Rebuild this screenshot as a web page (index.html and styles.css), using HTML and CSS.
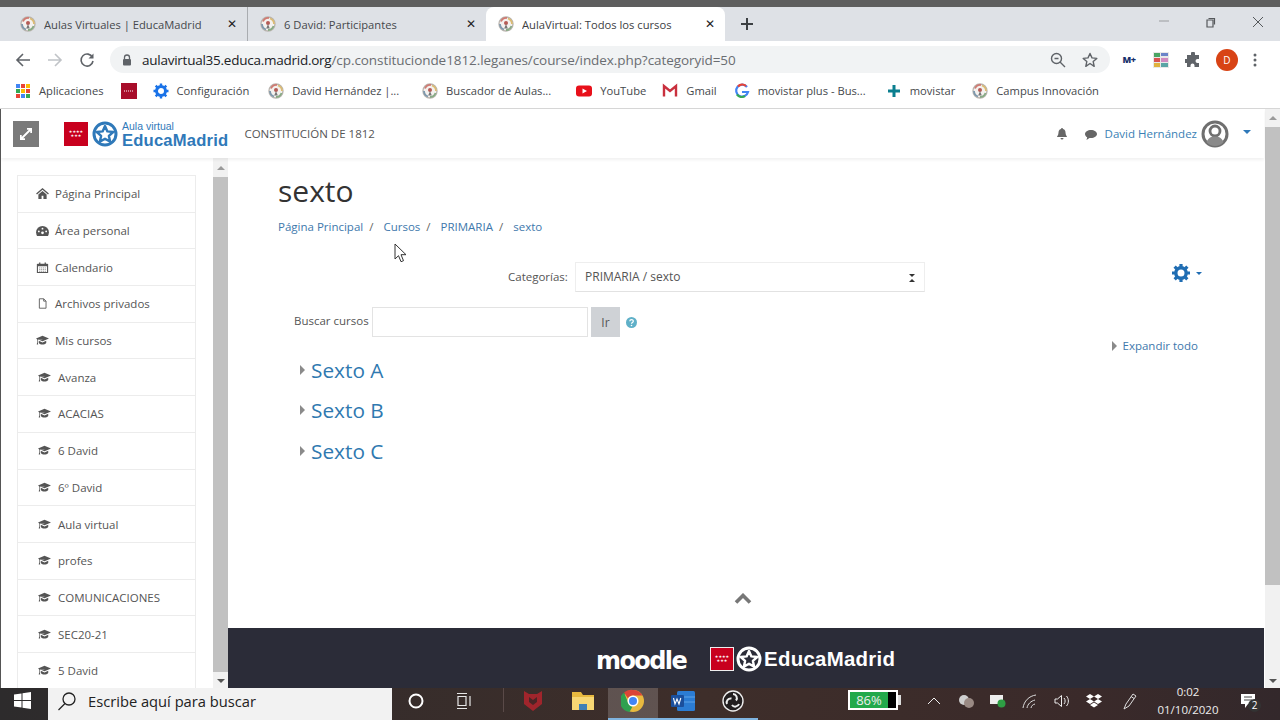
FILE: index.html
```html
<!DOCTYPE html>
<html lang="es">
<head>
<meta charset="utf-8">
<title>AulaVirtual: Todos los cursos</title>
<link rel="stylesheet" href="styles.css">
</head>
<body>
<svg class="defs" width="0" height="0" aria-hidden="true">
  <symbol id="fav" viewBox="0 0 16 16">
    <circle cx="8" cy="8" r="7" fill="#f4f1ee" stroke="#b9b4ae" stroke-width="1.400"/>
    <path d="M3 5.500A6 6 0 0 1 9 2" fill="none" stroke="#cf7a72" stroke-width="1.800"/>
    <path d="M10 2.500A6 6 0 0 1 14 8" fill="none" stroke="#dcbb72" stroke-width="1.800"/>
    <path d="M13.500 10A6 6 0 0 1 8 14" fill="none" stroke="#86ab84" stroke-width="1.800"/>
    <path d="M6 13.500A6 6 0 0 1 2 8" fill="none" stroke="#7d98ad" stroke-width="1.800"/>
    <circle cx="8" cy="7" r="2" fill="#b55c56"/><path d="M6.200 12.500 8 8l1.800 4.500z" fill="#777"/>
  </symbol>
  <symbol id="cap" viewBox="0 0 16 12">
    <path d="M8 0 16 3.500 8 7 3.600 5.100 8 4.600 7.800 4 2 5 0 3.500zM3.400 6.400 8 8.400l4.600-2v2.800C11.500 10.500 9.800 11 8 11S4.500 10.500 3.400 9.200zM1.400 4.800h.8v3.600l.5 2.600H.9l.5-2.600z" fill="#555"/>
  </symbol>
  <symbol id="star" viewBox="0 0 26 26">
    <circle cx="13" cy="13" r="11" fill="none" stroke="currentColor" stroke-width="3"/>
    <path d="M13 5l2.400 5.400 5.800.6-4.300 3.900 1.200 5.700L13 17.700l-5.100 2.900 1.200-5.700L4.800 11l5.800-.6z" fill="none" stroke="currentColor" stroke-width="2.400" stroke-linejoin="round"/>
  </symbol>
</svg>

<div class="topline"></div>

<div class="tabstrip">
  <div class="tab tab-first">
    <svg class="fav"><use href="#fav"/></svg><span class="tab-title">Aulas Virtuales | EducaMadrid</span><span class="tab-x">✕</span>
  </div>
  <div class="tab tab-second">
    <svg class="fav"><use href="#fav"/></svg><span class="tab-title">6 David: Participantes</span><span class="tab-x">✕</span>
  </div>
  <div class="tab tab-active">
    <svg class="fav"><use href="#fav"/></svg><span class="tab-title">AulaVirtual: Todos los cursos</span><span class="tab-x">✕</span>
  </div>
  <svg class="newtab" width="14" height="14" viewBox="0 0 14 14"><path d="M7 1v12M1 7h12" stroke="#3c4043" stroke-width="2"/></svg>
  <div class="winctl">
    <svg width="12" height="12" viewBox="0 0 12 12"><path d="M1 5h10" stroke="#9a9c9f"/></svg>
    <svg width="12" height="12" viewBox="0 0 12 12"><path d="M3.500 2.500h6v6M2 4h6v7H2z" fill="none" stroke="#55585b" stroke-width="1.200"/></svg>
    <svg width="12" height="12" viewBox="0 0 12 12"><path d="M1 1l10 10M11 1 1 11" stroke="#55585b"/></svg>
  </div>
</div>

<div class="toolbar">
  <svg class="navbtn" width="16" height="16" viewBox="0 0 16 16"><path d="M15 8H2M8 2 2 8l6 6" fill="none" stroke="#5f6368" stroke-width="1.600"/></svg>
  <svg class="navbtn" width="16" height="16" viewBox="0 0 16 16"><path d="M1 8h13M8 2l6 6-6 6" fill="none" stroke="#c0c3c7" stroke-width="1.600"/></svg>
  <svg class="navbtn" width="16" height="16" viewBox="0 0 16 16"><path d="M13.500 5.500A6 6 0 1 0 14 9" fill="none" stroke="#5f6368" stroke-width="1.600"/><path d="M14.500 1.500v5h-5z" fill="#5f6368"/></svg>
  <div class="omnibox">
    <svg class="lock" width="10" height="12" viewBox="0 0 10 12"><path d="M2.500 5V3.500a2.500 2.500 0 0 1 5 0V5" fill="none" stroke="#5f6368" stroke-width="1.300"/><rect x="1" y="5" width="8" height="6.500" rx="1" fill="#5f6368"/></svg>
    <span class="url"><span class="url-host">aulavirtual35.educa.madrid.org</span>/cp.constitucionde1812.leganes/course/index.php?categoryid=50</span>
    <svg class="zoom-ic" width="16" height="16" viewBox="0 0 16 16"><circle cx="6.500" cy="6.500" r="5" fill="none" stroke="#5f6368" stroke-width="1.400"/><path d="M10 10l5 5M4.500 6.500h4" stroke="#5f6368" stroke-width="1.400"/></svg>
    <svg class="star-ic" width="16" height="16" viewBox="0 0 16 16"><path d="M8 1.500l2 4.400 4.800.5-3.600 3.200 1 4.700L8 11.500l-4.200 2.800 1-4.700L1.200 6.400 6 5.900z" fill="none" stroke="#5f6368" stroke-width="1.400" stroke-linejoin="round"/></svg>
  </div>
  <div class="extensions">
    <span class="ext-m">M+</span>
    <svg width="16" height="16" viewBox="0 0 16 16"><rect width="16" height="16" fill="#e8e8e8"/><rect x="1" y="1" width="6" height="4" fill="#4aa564"/><rect x="8" y="1" width="7" height="3" fill="#6a84c9"/><rect x="1" y="6" width="6" height="4" fill="#d9534f"/><rect x="8" y="6" width="7" height="4" fill="#d08ac0"/><rect x="1" y="11" width="6" height="4" fill="#e0b23e"/><rect x="8" y="11" width="7" height="4" fill="#5aa5a5"/></svg>
    <svg width="16" height="16" viewBox="0 0 16 16"><path d="M6 1.500a2 2 0 0 1 4 0V3h4v4h-1.500a2 2 0 0 0 0 4H14v4H9.500v-1.500a2 2 0 0 0-4 0V15H2v-4H.5a2 2 0 0 1 0-4H2V3h4z" fill="#5f6368"/></svg>
    <span class="avatar-d">D</span>
    <svg width="4" height="14" viewBox="0 0 4 14"><circle cx="2" cy="2" r="1.500" fill="#5f6368"/><circle cx="2" cy="7" r="1.500" fill="#5f6368"/><circle cx="2" cy="12" r="1.500" fill="#5f6368"/></svg>
  </div>
</div>

<div class="bookmarks">
  <div class="bm">
    <svg class="bm-ic" viewBox="0 0 16 16"><rect x="1" y="1" width="4" height="4" fill="#4285f4"/><rect x="6" y="1" width="4" height="4" fill="#ea4335"/><rect x="11" y="1" width="4" height="4" fill="#fbbc05"/><rect x="1" y="6" width="4" height="4" fill="#34a853"/><rect x="6" y="6" width="4" height="4" fill="#fbbc05"/><rect x="11" y="6" width="4" height="4" fill="#ea4335"/><rect x="1" y="11" width="4" height="4" fill="#ea4335"/><rect x="6" y="11" width="4" height="4" fill="#4285f4"/><rect x="11" y="11" width="4" height="4" fill="#34a853"/></svg>
    <span>Aplicaciones</span>
  </div>
  <div class="bm bm-solo"><svg class="bm-ic" viewBox="0 0 16 16"><rect width="16" height="16" fill="#a80d2a"/><path d="M3 8h10" stroke="#fff" stroke-dasharray="1 1"/></svg></div>
  <div class="bm bm-conf">
    <svg class="bm-ic" viewBox="0 0 16 16"><circle cx="8" cy="8" r="4.500" fill="none" stroke="#1a73e8" stroke-width="3"/><path d="M8 .5v15M.5 8h15M2.700 2.700l10.600 10.600M13.300 2.700 2.700 13.300" stroke="#1a73e8" stroke-width="2.400" stroke-dasharray="3 9"/></svg>
    <span>Configuración</span>
  </div>
  <div class="bm"><svg class="bm-ic"><use href="#fav"/></svg><span class="bm-david">David Hernández |...</span></div>
  <div class="bm"><svg class="bm-ic"><use href="#fav"/></svg><span class="bm-long">Buscador de Aulas...</span></div>
  <div class="bm bm-yt">
    <svg class="bm-ic" viewBox="0 0 16 16"><rect y="2.500" width="16" height="11" rx="3" fill="#e8101a"/><path d="M6.500 5.500 11 8l-4.500 2.500z" fill="#fff"/></svg>
    <span>YouTube</span>
  </div>
  <div class="bm">
    <svg class="bm-ic" viewBox="0 0 16 16"><path d="M2 13.500V3l6 5 6-5v10.500" fill="none" stroke="#c9303e" stroke-width="2.400"/></svg>
    <span>Gmail</span>
  </div>
  <div class="bm">
    <svg class="bm-ic" viewBox="0 0 16 16"><path d="M13 4A6 6 0 1 0 14 9H8" fill="none" stroke="#4285f4" stroke-width="2.200"/><path d="M4 3.500A6 6 0 0 1 12 3" fill="none" stroke="#ea4335" stroke-width="2.200"/><path d="M3 11.500A6 6 0 0 0 11 13" fill="none" stroke="#34a853" stroke-width="2.200"/></svg>
    <span class="bm-mid">movistar plus - Bus...</span>
  </div>
  <div class="bm">
    <svg class="bm-ic" viewBox="0 0 16 16"><path d="M8 2v12M2 8h12" stroke="#0b7f8f" stroke-width="3"/></svg>
    <span>movistar</span>
  </div>
  <div class="bm"><svg class="bm-ic"><use href="#fav"/></svg><span>Campus Innovación</span></div>
</div>

<div class="page">
  <div class="pagecol">
    <header class="siteheader">
      <div class="expand-btn">
        <svg width="12" height="12" viewBox="0 0 12 12"><path d="M1 11 11 1M7 .8h4.200V5M5 11.200H.8V7" fill="none" stroke="#fff" stroke-width="1.800"/></svg>
      </div>
      <div class="logo">
        <div class="flag"><span class="flag-stars">★★★★<br>★★★</span></div>
        <svg class="logo-star"><use href="#star"/></svg>
        <div class="logo-text"><span class="logo-small">Aula virtual</span><span class="logo-big">EducaMadrid</span></div>
      </div>
      <span class="sitename">CONSTITUCIÓN DE 1812</span>
      <div class="usermenu">
        <svg width="10" height="12" viewBox="0 0 10 12"><path d="M5 0a1 1 0 0 1 1 1c2 .5 2.500 2 2.500 3.500 0 3 1.500 3.500 1.500 4.500H0c0-1 1.500-1.500 1.500-4.500C1.500 3 2 1.500 4 1a1 1 0 0 1 1-1zM3.500 10h3a1.500 1.500 0 0 1-3 0z" fill="#666"/></svg>
        <svg class="chat-ic" width="12" height="10" viewBox="0 0 12 10"><path d="M6 0c3.300 0 6 1.800 6 4S9.300 8 6 8H4.500L1.500 10l.7-2.700C.8 6.500 0 5.300 0 4c0-2.200 2.700-4 6-4z" fill="#666"/></svg>
        <span class="username">David Hernández</span>
        <svg class="useravatar" width="28" height="28" viewBox="0 0 28 28"><circle cx="14" cy="14" r="12" fill="#fff" stroke="#6f6f6f" stroke-width="3"/><circle cx="14" cy="11" r="5" fill="none" stroke="#6f6f6f" stroke-width="2.800"/><path d="M5.500 22c2-4.500 5-5.500 8.500-5.500s6.500 1 8.500 5.500c-2 2.500-5 4-8.500 4s-6.500-1.500-8.500-4z" fill="#8a8a8a"/></svg>
        <span class="user-caret"></span>
      </div>
    </header>

    <div class="pagebody">
      <aside class="sidecol">
        <nav class="sidenav">
          <a class="navitem"><svg class="nav-ic" viewBox="0 0 14 12"><path d="M7 0 14 6l-1 1-6-5-6 5-1-1zM2.500 7 7 3.200 11.500 7v5H8V8.500H6V12H2.500z" fill="#555"/></svg>Página Principal</a>
          <a class="navitem"><svg class="nav-ic" viewBox="0 0 14 12"><path d="M7 1a7 7 0 0 1 7 7c0 1.500-.4 2.800-1 4H1C.4 10.800 0 9.500 0 8a7 7 0 0 1 7-7z" fill="#555"/><circle cx="7" cy="8.500" r="1.500" fill="#fff"/><circle cx="3" cy="7" r="1" fill="#fff"/><circle cx="11" cy="7" r="1" fill="#fff"/><circle cx="7" cy="4" r="1" fill="#fff"/></svg>Área personal</a>
          <a class="navitem"><svg class="nav-ic" viewBox="0 0 14 13"><path d="M1 3h12v9.500H1z" fill="none" stroke="#555" stroke-width="1.300"/><path d="M1 2h12v3H1zM3 .5h1.500V3H3zM9.500.5H11V3H9.500z" fill="#555"/><path d="M3 7h8M3 9h8M3 11h8" stroke="#888" stroke-dasharray="1.500 .8"/></svg>Calendario</a>
          <a class="navitem"><svg class="nav-ic" viewBox="0 0 14 14"><path d="M3 1h5.500L11.500 4v9H3zM8.500 1v3h3" fill="none" stroke="#555" stroke-width="1.100"/></svg>Archivos privados</a>
          <a class="navitem"><svg class="nav-ic"><use href="#cap"/></svg>Mis cursos</a>
          <a class="navitem navitem-sub"><svg class="nav-ic"><use href="#cap"/></svg>Avanza</a>
          <a class="navitem navitem-sub"><svg class="nav-ic"><use href="#cap"/></svg>ACACIAS</a>
          <a class="navitem navitem-sub"><svg class="nav-ic"><use href="#cap"/></svg>6 David</a>
          <a class="navitem navitem-sub"><svg class="nav-ic"><use href="#cap"/></svg>6º David</a>
          <a class="navitem navitem-sub"><svg class="nav-ic"><use href="#cap"/></svg>Aula virtual</a>
          <a class="navitem navitem-sub"><svg class="nav-ic"><use href="#cap"/></svg>profes</a>
          <a class="navitem navitem-sub"><svg class="nav-ic"><use href="#cap"/></svg>COMUNICACIONES</a>
          <a class="navitem navitem-sub"><svg class="nav-ic"><use href="#cap"/></svg>SEC20-21</a>
          <a class="navitem navitem-sub"><svg class="nav-ic"><use href="#cap"/></svg>5 David</a>
        </nav>
      </aside>
      <div class="scrollbar scrollbar-side">
        <span class="sb-up"></span>
        <div class="sb-thumb sb-thumb-side"></div>
        <span class="sb-down"></span>
      </div>

      <main class="main">
        <div class="content">
          <h1 class="pagetitle">sexto</h1>
          <div class="crumbs">
            <a>Página Principal</a><span>/</span><a>Cursos</a><span>/</span><a>PRIMARIA</a><span>/</span><a>sexto</a>
          </div>
          <div class="catrow">
            <label class="catlabel">Categorías:</label>
            <div class="select">PRIMARIA / sexto<span class="select-arrows"></span></div>
            <div class="gear">
              <svg width="18" height="18" viewBox="0 0 18 18"><circle cx="9" cy="9" r="5.200" fill="none" stroke="#1f6db3" stroke-width="3.400"/><path d="M9 0v18M0 9h18M2.600 2.600l12.800 12.800M15.400 2.600 2.600 15.400" stroke="#1f6db3" stroke-width="3.200" stroke-dasharray="3 12"/></svg>
              <span class="gear-caret"></span>
            </div>
          </div>
          <div class="searchrow">
            <label class="searchlabel">Buscar cursos</label>
            <div class="searchinput"></div>
            <button class="gobtn" type="button">Ir</button>
            <svg class="help" width="11" height="11" viewBox="0 0 11 11"><circle cx="5.500" cy="5.500" r="5.500" fill="#5fb0c8"/><path d="M3.800 4.200c0-2.200 3.500-2.200 3.500 0 0 1.300-1.800 1.200-1.800 2.500" fill="none" stroke="#fff" stroke-width="1.200"/><circle cx="5.500" cy="8.500" r=".8" fill="#fff"/></svg>
          </div>
          <div class="expandrow"><span class="tri"></span><a>Expandir todo</a></div>
          <div class="sections">
            <div class="section"><span class="tri"></span><a>Sexto A</a></div>
            <div class="section"><span class="tri"></span><a>Sexto B</a></div>
            <div class="section"><span class="tri"></span><a>Sexto C</a></div>
          </div>
        </div>
        <div class="totop">
          <svg width="18" height="11" viewBox="0 0 18 11"><path d="M2 9.500 9 2.500l7 7" fill="none" stroke="#777" stroke-width="3.600"/></svg>
        </div>
        <footer class="footer">
          <span class="moodle">moodle</span>
          <div class="flag flag-foot"><span class="flag-stars">★★★★<br>★★★</span></div>
          <svg class="foot-star"><use href="#star"/></svg>
          <span class="foot-name">EducaMadrid</span>
        </footer>
      </main>
    </div>
  </div>
  <div class="scrollbar scrollbar-page">
    <span class="sb-up"></span>
    <div class="sb-thumb sb-thumb-page"></div>
    <span class="sb-down"></span>
  </div>
  <svg class="cursor" width="14" height="20" viewBox="0 0 14 20"><path d="M1 1v15l3.500-3.300 2.500 6 2.500-1-2.500-6H12z" fill="#fff" stroke="#333" stroke-width="1"/></svg>
</div>

<div class="taskbar">
  <div class="tb-start"><svg width="17" height="17" viewBox="0 0 17 17"><path d="M0 2.500 7.500 1.400V8H0zM8.500 1.300 17 0v8H8.500zM0 9h7.500v6.600L0 14.500zM8.500 9H17v8l-8.500-1.300z" fill="#fff"/></svg></div>
  <div class="tb-search">
    <svg width="20" height="20" viewBox="0 0 20 20"><circle cx="12" cy="8" r="6" fill="none" stroke="#222" stroke-width="1.300"/><path d="M8 12.500 1.500 19" stroke="#222" stroke-width="1.300"/></svg>
    <span>Escribe aquí para buscar</span>
  </div>
  <div class="tb-cell tb-cell-sys"><svg width="16" height="16" viewBox="0 0 16 16"><circle cx="8" cy="8" r="6.500" fill="none" stroke="#fff" stroke-width="2"/></svg></div>
  <div class="tb-cell tb-cell-sys"><svg width="16" height="16" viewBox="0 0 16 16"><path d="M1 .5h10M1 15.500h10M2 3.500h8v9H2zM14 3v10" fill="none" stroke="#e8e8e8" stroke-width="1.200"/></svg></div>
  <div class="tb-divider"></div>
  <div class="tb-cell"><svg width="20" height="22" viewBox="0 0 20 22"><path d="M1 1l5 3h8l5-3v13l-9 7-9-7z" fill="#a0252c"/><path d="M6 7l4 3 4-3v5l-4 3-4-3z" fill="#4a2526"/></svg></div>
  <div class="tb-cell"><svg width="22" height="20" viewBox="0 0 22 20"><path d="M0 1h9l2 3h11v3H0z" fill="#e8b93f"/><rect y="6" width="22" height="13" fill="#f7d774"/><rect x="7" y="13" width="8" height="6" fill="#3f7fb5"/></svg></div>
  <div class="tb-cell tb-cell-on"><svg width="24" height="24" viewBox="0 0 24 24"><circle cx="12" cy="12" r="11" fill="#e8b93f"/><path d="M12 1a11 11 0 0 1 9.500 5.500H12A5.500 5.500 0 0 0 7 9.500L3 3.500A11 11 0 0 1 12 1z" fill="#db4437"/><path d="M3 3.500 7.500 14.500a5.500 5.500 0 0 0 4 3L8.500 23A11 11 0 0 1 3 3.500z" fill="#2fa04f"/><circle cx="12" cy="12" r="5.500" fill="#fff"/><circle cx="12" cy="12" r="4" fill="#4285f4"/></svg></div>
  <div class="tb-cell tb-cell-open"><svg width="24" height="22" viewBox="0 0 24 22"><rect x="6" y="1" width="18" height="20" rx="1.500" fill="#2b7cd3"/><path d="M6 7h18M6 12h18" stroke="#5ea3e8"/><rect y="5" width="13" height="12" rx="1" fill="#1b4f9c"/><path d="M2.500 8l1.500 6 2-5 2 5 1.800-6" fill="none" stroke="#fff" stroke-width="1.100"/></svg></div>
  <div class="tb-cell tb-cell-open"><svg width="22" height="22" viewBox="0 0 22 22"><circle cx="11" cy="11" r="10" fill="#221e1f" stroke="#eee" stroke-width="1.400"/><path d="M11 4a4 4 0 0 1 3 6.500M5 14a4 4 0 0 1 4.500-5.500M17 14a4 4 0 0 1-7 1" fill="none" stroke="#eee" stroke-width="2"/></svg></div>
  <div class="battery"><span class="batt-fill">86%</span><span class="batt-rest"></span></div>
  <div class="tray">
    <div class="tray-cell"><svg width="14" height="8" viewBox="0 0 14 8"><path d="M1 7l6-6 6 6" fill="none" stroke="#eee"/></svg></div>
    <div class="tray-cell"><svg width="16" height="14" viewBox="0 0 16 14"><circle cx="6" cy="6" r="5" fill="#cfcfcf"/><circle cx="11" cy="9" r="5" fill="#9a8a84"/></svg></div>
    <div class="tray-cell"><svg width="16" height="14" viewBox="0 0 16 14"><rect y="1" width="13" height="9" fill="#eee"/><circle cx="11.500" cy="9.500" r="4" fill="#2e9e44"/></svg></div>
    <div class="tray-cell"><svg width="16" height="16" viewBox="0 0 16 16"><path d="M1 15C2 8 7 3 14 2M5 15c.6-4 4-7 8-8M9 15c.3-2 1.800-3.500 4-4" fill="none" stroke="#ddd"/></svg></div>
    <div class="tray-cell"><svg width="16" height="16" viewBox="0 0 16 16"><path d="M1 6h2.500L7.500 2.500v11L3.500 10H1zM10 5c1.500 1.500 1.500 4.500 0 6M12.500 3c2.500 3 2.500 7 0 10" fill="none" stroke="#eee"/></svg></div>
    <div class="tray-cell"><svg width="16" height="14" viewBox="0 0 16 14"><path d="M4 0l4 2.500L4 5 0 2.500zM12 0l4 2.500L12 5 8 2.500zM4 5l4 2.500L4 10 0 7.500zM12 5l4 2.500L12 10 8 7.500zM8 8.500l4 2.500-4 2.500L4 11z" fill="#fff"/></svg></div>
    <div class="tray-cell tray-pen"><svg width="16" height="18" viewBox="0 0 16 18"><path d="M2 17 4 12 11 2l3 2-7 10zM9 4.500l3 2" fill="none" stroke="#ddd"/></svg></div>
  </div>
  <div class="clock"><span class="clock-time">0:02</span><span>01/10/2020</span></div>
  <div class="notif">
    <svg width="16" height="16" viewBox="0 0 16 16"><path d="M1 1h14v10H8l-3 4v-4H1z" fill="#fff"/><path d="M4 4h8M4 7h8" stroke="#444"/></svg>
    <span class="notif-count">2</span>
  </div>
</div>
</body>
</html>
```

FILE: styles.css
```css
* { box-sizing: border-box; }
html, body { margin: 0; padding: 0; width: 1280px; height: 720px; overflow: hidden; }
body { display: flex; flex-direction: column; font-family: "Open Sans", "Noto Sans", sans-serif; color: #555; background: #fff; }
.defs { position: absolute; }

.topline { height: 7px; background: #5e5e5e; flex: none; }

/* Tabs */
.tabstrip { height: 34px; flex: none; display: flex; align-items: stretch; background: #dee1e6; padding-left: 8px; }
.tab { width: 239px; display: flex; align-items: center; padding: 0 10px 0 12px; font-size: 11.200px; color: #45484c; position: relative; }
.tab-first { width: 240px; border-right: 1px solid #a9acb0; }
.tab-second { width: 238px; }
.tab-active { background: #fff; border-radius: 8px 8px 0 0; color: #3c4043; }
.fav { width: 16px; height: 16px; flex: none; }
.tab-title { margin-left: 8px; flex: 1; white-space: nowrap; overflow: hidden; }
.tab-x { font-size: 12px; color: #222; font-family: "DejaVu Sans", sans-serif; }
.newtab { align-self: center; margin-left: 15px; }
.winctl { margin-left: auto; display: flex; width: 138px; justify-content: space-between; padding: 0 16px; align-items: flex-start; padding-top: 9px; }

/* Toolbar */
.toolbar { height: 37px; flex: none; display: flex; align-items: center; padding-left: 15px; background: #fff; }
.navbtn { margin-right: 16px; flex: none; }
.omnibox { width: 1000px; height: 27px; margin-left: -1px; border-radius: 14px; background: #f1f3f4; display: flex; align-items: center; padding-left: 12px; padding-right: 12px; }
.lock { flex: none; }
.url { margin-left: 10px; font-size: 13.500px; letter-spacing: -.07px; color: #6a6d71; white-space: nowrap; font-family: "Open Sans", sans-serif; }
.url-host { color: #202124; letter-spacing: -.25px; }
.zoom-ic { margin-left: auto; }
.star-ic { margin-left: 16px; }
.extensions { display: flex; align-items: center; margin-left: 11px; gap: 16px; }
.ext-m { font-size: 9px; font-weight: 800; color: #16306b; width: 16px; text-align: center; letter-spacing: -.5px; }
.avatar-d { width: 22px; height: 22px; border-radius: 50%; background: #d84315; color: #fff; font-size: 10px; display: flex; align-items: center; justify-content: center; margin-left: -1px; margin-right: -1px; }

/* Bookmarks */
.bookmarks { height: 31px; flex: none; display: flex; align-items: center; padding: 0 0 5px 15px; gap: 17px; background: #fff; border-bottom: 1px solid #d6d6d6; font-size: 11.200px; color: #45484c; white-space: nowrap; }
.bm { display: flex; align-items: center; gap: 8px; }
.bm-solo { margin-right: -1px; }
.bm-conf { margin-right: 2px; }
.bm-yt { margin-right: -1px; }
.bm-ic { width: 16px; height: 16px; flex: none; }
.bm-long { padding-right: 8px; }
.bm-david { padding-right: 6px; letter-spacing: -.05px; }
.bm-mid { padding-right: 3px; }

/* Page */
.page { height: 579px; flex: none; display: flex; position: relative; overflow: hidden; border-left: 1px solid #555; background: #fff; }
.pagecol { flex: 1; min-width: 0; display: flex; flex-direction: column; }
.siteheader { height: 49px; flex: none; display: flex; align-items: center; padding-left: 12px; box-shadow: 0 2px 3px rgba(0,0,0,.06); position: relative; z-index: 1; background: #fff; }
.expand-btn { width: 26px; height: 26px; background: #7a7a7a; display: flex; align-items: center; justify-content: center; }
.logo { display: flex; align-items: center; margin-left: 25px; }
.flag { width: 24px; height: 24px; background: #c8001e; color: #fff; display: flex; align-items: center; justify-content: center; flex: none; }
.flag-stars { font-size: 4px; line-height: 4px; text-align: center; font-family: "DejaVu Sans", sans-serif; }
.logo-star { width: 26px; height: 26px; margin-left: 4px; color: #2f79b9; }
.logo-text { display: flex; flex-direction: column; margin-left: 4px; margin-top: 3px; color: #2f79b9; font-family: "Liberation Sans", sans-serif; }
.logo-small { font-size: 10.500px; line-height: 11px; }
.logo-big { font-size: 16.600px; line-height: 17px; font-weight: 700; letter-spacing: .2px; }
.sitename { margin-left: 16px; font-size: 11.500px; color: #555; white-space: nowrap; }
.usermenu { margin-left: auto; display: flex; align-items: center; padding-right: 13px; }
.chat-ic { margin-left: 18px; margin-top: 3px; }
.username { margin-left: 8px; margin-right: 4px; font-size: 11.500px; color: #3a7fb5; white-space: nowrap; }
.useravatar { flex: none; }
.user-caret { margin-left: 14px; margin-top: -3px; width: 0; height: 0; border-left: 4px solid transparent; border-right: 4px solid transparent; border-top: 4px solid #2f79b9; }

.pagebody { flex: 1; min-height: 0; display: flex; }
.sidecol { width: 212px; flex: none; padding: 17px 0 0 16px; overflow: hidden; }
.sidenav { width: 179px; border: 1px solid #ececec; border-bottom: 0; }
.navitem { height: 36.700px; display: flex; align-items: center; padding-left: 18px; font-size: 11.500px; color: #555; border-bottom: 1px solid #ececec; white-space: nowrap; }
.navitem-sub { padding-left: 20px; }
.nav-ic { width: 13px; height: 11px; margin-right: 6px; flex: none; }
.navitem-sub .nav-ic { margin-right: 7px; }

.scrollbar { width: 15px; flex: none; background: #f1f1f1; display: flex; flex-direction: column; align-items: center; }
.sb-thumb { width: 15px; background: #c1c1c1; }
.sb-thumb-side { height: 495px; }
.sb-thumb-page { height: 458px; }
.sb-up, .sb-down { width: 0; height: 0; border-left: 4px solid transparent; border-right: 4px solid transparent; }
.sb-up { border-bottom: 4px solid #9a9a9a; margin: 8px 0 7px; }
.sb-down { border-top: 4px solid #555; margin-top: auto; margin-bottom: 5px; }
.scrollbar-page .sb-up { margin: 7px 0 7px; }
.scrollbar-page { margin-left: 1px; }

.main { flex: 1; min-width: 0; display: flex; flex-direction: column; }
.content { flex: 1; padding-left: 50px; }
.pagetitle { margin: 15px 0 0; font-size: 30px; line-height: 36px; font-weight: 400; color: #333; }
.crumbs { margin-top: 8px; height: 18px; display: flex; align-items: center; font-size: 11.500px; color: #666; white-space: nowrap; }
.crumbs a { color: #3e78ac; }
.crumbs span { margin: 0 10px 0 6px; }
.catrow { margin-top: 27px; height: 30px; display: flex; align-items: center; padding-left: 230px; font-size: 11.500px; color: #555; }
.catlabel { width: 67px; padding-bottom: 2px; }
.select { width: 350px; height: 30px; display: flex; align-items: center; padding: 0 0 2px 9px; border: 1px solid #eee; border-bottom-color: #e2e2e2; color: #555; font-size: 12px; position: relative; }
.select-arrows { position: absolute; right: 9px; top: 11px; width: 0; height: 8px; border-left: 3px solid transparent; border-right: 3px solid transparent; border-top: 3.500px solid #333; border-bottom: 3.500px solid #333; }
.gear { margin-left: auto; margin-right: 62px; margin-top: -8px; display: flex; align-items: center; gap: 6px; }
.gear-caret { width: 0; height: 0; border-left: 3px solid transparent; border-right: 3px solid transparent; border-top: 3px solid #1f6db3; }
.searchrow { margin-top: 15px; height: 30px; display: flex; align-items: center; padding-left: 16px; font-size: 11.500px; color: #555; }
.searchlabel { width: 78px; margin-top: -4px; white-space: nowrap; }
.searchinput { width: 216px; height: 30px; border: 1px solid #e3e3e3; }
.gobtn { width: 29px; height: 30px; margin-left: 3px; border: 0; background: #cfd2d6; color: #555; font: inherit; font-size: 12px; padding: 0; }
.help { margin-left: 6px; }
.expandrow { height: 16px; padding-top: 2px; padding-right: 66px; display: flex; align-items: center; justify-content: flex-end; font-size: 11.500px; line-height: 14px; }
.expandrow a { color: #3e78ac; }
.expandrow .tri { margin-right: 6px; }
.tri { width: 0; height: 0; border-top: 5px solid transparent; border-bottom: 5px solid transparent; border-left: 5px solid #8a8a8a; flex: none; }
.sections { display: flex; flex-direction: column; gap: 4.400px; padding-left: 22px; margin-top: -1px; }
.section { height: 36px; display: flex; align-items: center; font-size: 20.800px; color: #2f79b0; }
.section .tri { margin-right: 6px; }
.totop { height: 40px; flex: none; display: flex; justify-content: center; align-items: flex-start; padding-right: 6px; padding-top: 5px; }
.footer { height: 60px; flex: none; background: #2b2c38; display: flex; align-items: center; padding: 2px 0 0 368px; color: #fff; }
.moodle { width: 114px; margin-top: 4px; font-family: "DejaVu Sans", sans-serif; font-size: 24px; font-weight: 700; letter-spacing: -1.600px; white-space: nowrap; }
.flag-foot { border: 1px solid #eee; }
.foot-star { width: 26px; height: 26px; margin-left: 2px; color: #fff; }
.foot-name { margin-left: 2px; font-family: "Liberation Sans", sans-serif; font-size: 20.400px; font-weight: 700; letter-spacing: .3px; }
.cursor { position: absolute; left: 393px; top: 134px; }

/* Taskbar */
.taskbar { height: 32px; flex: none; display: flex; align-items: center; background: linear-gradient(90deg, #2d2b2c 0%, #3e2e2a 55%, #3a2a2a 85%, #33282b 100%); color: #eee; }
.tb-start { width: 48px; height: 32px; display: flex; align-items: center; justify-content: center; padding: 0 4px 7px 0; }
.tb-search { width: 344px; height: 32px; background: #f2f2f2; display: flex; align-items: center; padding: 0 0 6px 9px; gap: 11px; color: #222; font-size: 14.700px; white-space: nowrap; }
.tb-cell { width: 50px; height: 32px; display: flex; align-items: center; justify-content: center; padding-bottom: 7px; }
.tb-cell-sys { width: 48px; }
.tb-cell-on { background: rgba(255,255,255,.18); border-bottom: 2px solid #7fb4e0; padding-bottom: 5px; }
.tb-cell-open { border-bottom: 2px solid #7fb4e0; padding-bottom: 5px; }
.tb-divider { width: 20px; height: 24px; margin-bottom: 8px; border-left: 1px solid #5a4a48; transform: translateX(15px); }
.battery { margin: 0 0 8px 90px; width: 50px; height: 20px; display: flex; border: 2px solid #fff; background: #000; position: relative; }
.battery::after { content: ""; position: absolute; right: -5px; top: 3px; width: 3px; height: 10px; background: #ddd; }
.batt-fill { width: 38px; background: #22a94b; color: #eee; font-size: 13px; line-height: 16px; text-align: center; }
.tray { margin-left: 20px; display: flex; }
.tray-cell { width: 32px; height: 32px; display: flex; align-items: center; justify-content: center; padding-bottom: 7px; }
.tray-pen { width: 40px; }
.clock { width: 84px; margin-left: -4px; margin-top: -9px; height: 32px; display: flex; flex-direction: column; align-items: center; font-size: 11.500px; line-height: 15px; }
.clock-time { margin-bottom: 3px; }
.notif { width: 36px; height: 32px; position: relative; display: flex; align-items: center; justify-content: center; padding-bottom: 7px; }
.notif-count { position: absolute; right: 5px; bottom: 8px; width: 13px; height: 13px; border-radius: 50%; background: #333; color: #fff; font-size: 10px; line-height: 13px; text-align: center; }
```
